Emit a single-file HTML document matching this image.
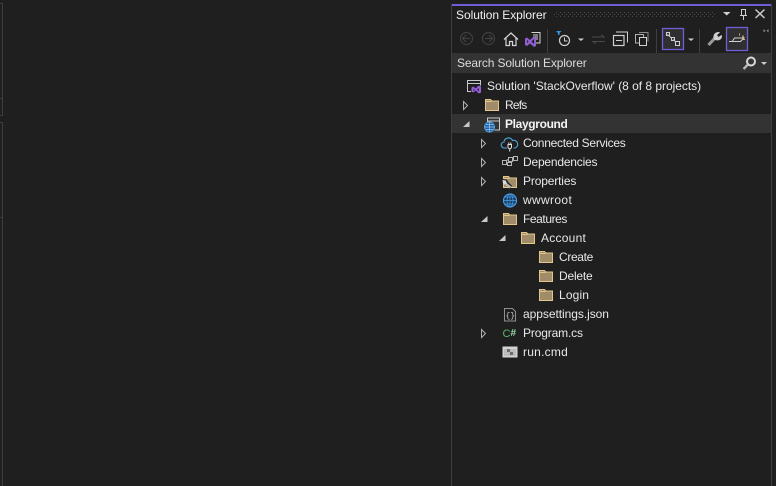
<!DOCTYPE html>
<html><head><meta charset="utf-8">
<style>
html,body{margin:0;padding:0;background:#1f1f1f;width:776px;height:486px;overflow:hidden}
body{position:relative;font-family:"Liberation Sans",sans-serif;font-size:12px;color:#e8e8e8}
.a{position:absolute}
.t{position:absolute;white-space:nowrap;line-height:19px;height:19px;letter-spacing:-.05px}
svg{position:absolute;overflow:visible}
</style></head><body>
<div class="a" style="left:2px;top:3px;width:1px;height:483px;background:#3d3d3d"></div>
<div class="a" style="left:0;top:3px;width:2px;height:1px;background:#3d3d3d"></div>
<div class="a" style="left:0;top:98px;width:2px;height:1px;background:#3d3d3d"></div>
<div class="a" style="left:0;top:115px;width:2px;height:1px;background:#3d3d3d"></div>
<div class="a" style="left:0;top:116px;width:3px;height:6px;background:#1f1f1f"></div>
<div class="a" style="left:0;top:122px;width:2px;height:1px;background:#3d3d3d"></div>
<div class="a" style="left:0;top:217px;width:2px;height:1px;background:#3d3d3d"></div>

<div class="a" style="left:451px;top:4px;width:1px;height:482px;background:#3d3d3d"></div>
<div class="a" style="left:771px;top:4px;width:1px;height:482px;background:#3d3d3d"></div>
<div class="a" style="left:452px;top:4px;width:319px;height:2px;background:#6e5fd6"></div>
<div class="t" style="left:456px;top:6px;color:#f0f0f0">Solution Explorer</div>
<svg width="776" height="486" style="left:0;top:0">
<defs><pattern id="d" width="4" height="4" patternUnits="userSpaceOnUse"><rect width="1" height="1" fill="#4a4a4a"/><rect x="2" y="2" width="1" height="1" fill="#4a4a4a"/></pattern></defs>
<rect x="554" y="12" width="161" height="5" fill="url(#d)"/>
<path d="M723 12h7.500l-3.750 3.500z" fill="#d0d0d0"/>
<path d="M741.500 9.500h4v6h-4zM740 15.500h7M743.500 16v4" fill="none" stroke="#d0d0d0"/>
<path d="M755.500 9.500l9 8.500M764.500 9.500l-9 8.500" stroke="#c8c8c8" stroke-width="1.500"/>

<g fill="none" stroke="#3f3f3f" stroke-width="1.200">
<circle cx="466.500" cy="38.500" r="6"/><path d="M470 38.500h-7M466 35l-3.500 3.500 3.500 3.500"/>
<circle cx="488.500" cy="38.500" r="6"/><path d="M485 38.500h7M489 35l3.500 3.500-3.500 3.500"/>
</g>
<path d="M504 39.500l7-6.500 7 6.500M506 37.500V45.500h3.500v-4h3v4h3.500v-8" fill="none" stroke="#d6d6d6" stroke-width="1.200"/>
<path d="M531.500 32.500h8.500v10.500h-6" fill="#1f1f1f" stroke="#d4d4d4"/><path d="M533 35h5M533 37h5M533 39h5" stroke="#d4d4d4"/>
<path d="M525 38.500l2-1 3 2.500 4-3.500 2 1v8.500l-2 1-4-3.500-3 2.500-2-1z" fill="#8f5fd0"/><path d="M527 40v3l1.500-1.500zM534 39v5l-2.500-2.500z" fill="#1f1f1f"/>
<path d="M547.500 29v24" stroke="#3f3f3f"/>
<path d="M556 31h5.500l-2 2v2h-1.500v-2z" fill="#3a96dd"/>
<circle cx="564.500" cy="40.500" r="5" fill="none" stroke="#d0d0d0" stroke-width="1.200"/><path d="M564.500 37.500v3.500h3" fill="none" stroke="#d0d0d0"/>
<path d="M578 38.500h6l-3 2.500z" fill="#d0d0d0"/>
<path d="M592 37h12l-3-2.500M605 41.500h-12l3 2" fill="none" stroke="#4a4a4a" stroke-width="1.100"/>
<rect x="613.500" y="35.500" width="10.500" height="10" fill="none" stroke="#d0d0d0" stroke-width="1.200"/><path d="M616 32h11.500v10.500" fill="none" stroke="#d0d0d0"/><path d="M616 40.500h6" stroke="#d0d0d0"/>
<path d="M639 32.500h9v9" fill="none" stroke="#8a8a8a"/><rect x="635.500" y="34.500" width="8" height="8.500" fill="none" stroke="#b0b0b0"/><rect x="639.500" y="37.500" width="7" height="8" fill="#1f1f1f" stroke="#d0d0d0"/>
<path d="M656.500 29v24" stroke="#3f3f3f"/>
<rect x="662.500" y="28.500" width="21" height="21" fill="#2f2f2f" stroke="#6e5fd6" stroke-width="1.300"/>
<path d="M667.500 34.500l4 3.500M673 39.500l2.500 2" stroke="#d0d0d0"/><rect x="666.500" y="32.500" width="3" height="3" fill="none" stroke="#d0d0d0"/><rect x="671.500" y="37.500" width="3" height="3" fill="none" stroke="#d0d0d0"/><rect x="675.500" y="41.500" width="4" height="4" fill="none" stroke="#d0d0d0"/>
<path d="M688 38.500h6l-3 2.500z" fill="#d0d0d0"/>
<path d="M699.500 29v24" stroke="#3f3f3f"/>
<path d="M708.500 45l6.500-7" stroke="#9a9a9a" stroke-width="3"/><path d="M714 39.500c-1.800-3.500 .5-8 5-7.500l1 .5-3 2.500 1.500 2 3-2 .5 1c0 4-4 5.500-8 3.500z" fill="#d0d0d0"/>
<rect x="726.500" y="27.500" width="21" height="23" fill="#2f2f2f" stroke="#6e5fd6" stroke-width="1.300"/>
<path d="M729 41.500h11.500l3.500-3.500h-9.500l-2 3" fill="none" stroke="#d0d0d0"/>
<path d="M739 33.500h1v2h-1z" fill="#d6b46c"/><path d="M742 35.500h2v2h-2z" fill="#a88a50"/><path d="M743 39h2v1h-2z" fill="#d6b46c"/>
<path d="M763.500 29v3.500l2-1.750zM768.500 29v3.500l-2-1.750z" fill="#8a8a8a"/>
</svg>

<div class="a" style="left:452px;top:53px;width:319px;height:20px;background:#333333"></div>
<div class="t" style="left:457px;top:54px;color:#dcdcdc;letter-spacing:-.13px">Search Solution Explorer</div>
<svg width="776" height="486" style="left:0;top:0">
<circle cx="751" cy="61.500" r="4" fill="none" stroke="#d8d8d8" stroke-width="2"/><path d="M748 64.500l-4.500 4.500" stroke="#b8b8b8" stroke-width="2.300"/>
<path d="M761 62h6l-3 3z" fill="#c8c8c8"/>
</svg>

<div class="a" style="left:452px;top:114px;width:319px;height:19px;background:#333333"></div>

<div class="t" style="left:487px;top:77px;letter-spacing:-.03px">Solution 'StackOverflow' (8 of 8 projects)</div>
<div class="t" style="left:505px;top:96px;letter-spacing:-.8px">Refs</div>
<div class="t" style="left:505px;top:115px;font-weight:bold;color:#f4f4f4;letter-spacing:-.35px">Playground</div>
<div class="t" style="left:523px;top:134px;letter-spacing:-.27px">Connected Services</div>
<div class="t" style="left:523px;top:153px;letter-spacing:-.2px">Dependencies</div>
<div class="t" style="left:523px;top:172px;letter-spacing:-.15px">Properties</div>
<div class="t" style="left:523px;top:191px;letter-spacing:.35px">wwwroot</div>
<div class="t" style="left:523px;top:210px;letter-spacing:-.42px">Features</div>
<div class="t" style="left:541px;top:229px;letter-spacing:.25px">Account</div>
<div class="t" style="left:559px;top:248px;letter-spacing:-.35px">Create</div>
<div class="t" style="left:559px;top:267px;letter-spacing:-.2px">Delete</div>
<div class="t" style="left:559px;top:286px;letter-spacing:.15px">Login</div>
<div class="t" style="left:523px;top:305px">appsettings.json</div>
<div class="t" style="left:523px;top:324px;letter-spacing:-.15px">Program.cs</div>
<div class="t" style="left:523px;top:343px;letter-spacing:.25px">run.cmd</div>

<svg width="776" height="486" style="left:0;top:0">
<defs>
<g id="f"><path d="M.5 12.500V1.500h5l1.500 1.500h6.500v9.500z" fill="#a08c68" stroke="#e3c68b"/><path d="M1 3.500h5.500" stroke="#e3c68b"/></g>
<path id="o" d="M.5.500L4.500 4.500 .5 8.500z" fill="none" stroke="#b0b0b0"/>
<path id="e" d="M6.500 0v6H0z" fill="#c8c8c8"/>
</defs>
<!-- Solution -->
<path d="M471 91.500h-3.500V80.500h13v5M468 83.500h12" fill="none" stroke="#c8c8c8"/>
<path d="M471.500 87.500l1.800-1 2.400 2 3-3 2.300 1v6l-2.300 1-3-3-2.400 2-1.800-1z" fill="#9b5fe0"/><path d="M473.500 88.500v2.500l1.300-1.250zM478.800 88v3.500l-1.800-1.750z" fill="#1f1f1f"/>
<use href="#o" x="463" y="101"/>
<use href="#f" x="485" y="98"/>
<!-- Playground -->
<use href="#e" x="463" y="121"/>
<path d="M487.500 122v-4h12v12h-5M488 121h11" fill="none" stroke="#c8c8c8"/>
<circle cx="489.500" cy="127" r="5" fill="#1f5f9f" stroke="#4a9be0"/><path d="M484.500 127h10M489.500 122v10M486 124.500h7M486 129.500h7" stroke="#9cc8f0" stroke-width=".7"/>
<!-- Connected -->
<use href="#o" x="481" y="139"/>
<path d="M507 148h-2.500a3 3 0 0 1-.500-6 4.500 4.500 0 0 1 8.500-1.500 3.500 3.500 0 0 1 2.500 7.500h-1.500" fill="none" stroke="#4ea6dc" stroke-width="1.100"/>
<path d="M508 144.500h3.500v2.500a1.700 1.700 0 0 1-3.500 0zM509.700 149v2.500M508.800 142.500v2M510.800 142.500v2" fill="none" stroke="#e0e0e0"/>
<!-- Dependencies -->
<use href="#o" x="481" y="158"/>
<g fill="none" stroke="#b4b4b4"><rect x="508.500" y="157.500" width="4" height="4"/><rect x="513.500" y="156.500" width="4" height="4"/><rect x="507.500" y="162.500" width="4" height="3"/><rect x="502.500" y="160.500" width="4" height="4"/><path d="M506 160.500l2.500-1M511 162.500l2.500-2"/></g>
<!-- Properties -->
<use href="#o" x="481" y="177"/>
<use href="#f" x="503" y="175"/>
<path d="M502.500 180.500l3.500.5 1 2 3 3-1 1.500" fill="none" stroke="#1f1f1f" stroke-width="3"/>
<path d="M502.500 180.500l3 .5 1 2.500-2 .5-1.500-1.500" fill="#d8d8d8" stroke="#d8d8d8"/><path d="M506 184l4.500 3.500" stroke="#b8b8b8" stroke-width="2.500"/>
<!-- wwwroot -->
<circle cx="510" cy="200.500" r="6.500" fill="#143a60" stroke="#4a9be0" stroke-width="1.200"/><path d="M503.500 200.500h13M510 194v13M505 197h10M505 204h10" stroke="#4a9be0" stroke-width=".8"/><ellipse cx="510" cy="200.500" rx="3" ry="6.500" fill="none" stroke="#4a9be0" stroke-width=".8"/>
<!-- Features -->
<use href="#e" x="481" y="216"/>
<use href="#f" x="503" y="212"/>
<use href="#e" x="499" y="235"/>
<use href="#f" x="521" y="231"/>
<use href="#f" x="539" y="250"/>
<use href="#f" x="539" y="269"/>
<use href="#f" x="539" y="288"/>
<!-- json -->
<path d="M504.500 308.500h8l3 3v9.500h-11z" fill="#1f1f1f" stroke="#909090"/>
<text x="505.500" y="318" font-family="Liberation Mono" font-size="8" fill="#c8c8c8">{}</text>
<!-- program -->
<use href="#o" x="481" y="329"/>
<text x="502.500" y="337" font-family="Liberation Sans" font-size="11" fill="#57b96d">C</text>
<text x="510.500" y="336" font-family="Liberation Sans" font-size="10" font-weight="bold" fill="#9ed8a8">#</text>
<!-- cmd -->
<rect x="502.500" y="346.500" width="15" height="11" fill="#d4d4d4"/><rect x="504" y="349" width="12" height="7" fill="#bcbcbc"/><path d="M507 349h3v3h-3zM510 352h3v3h-3z" fill="#6a6a6a"/>
</svg>
</body></html>
